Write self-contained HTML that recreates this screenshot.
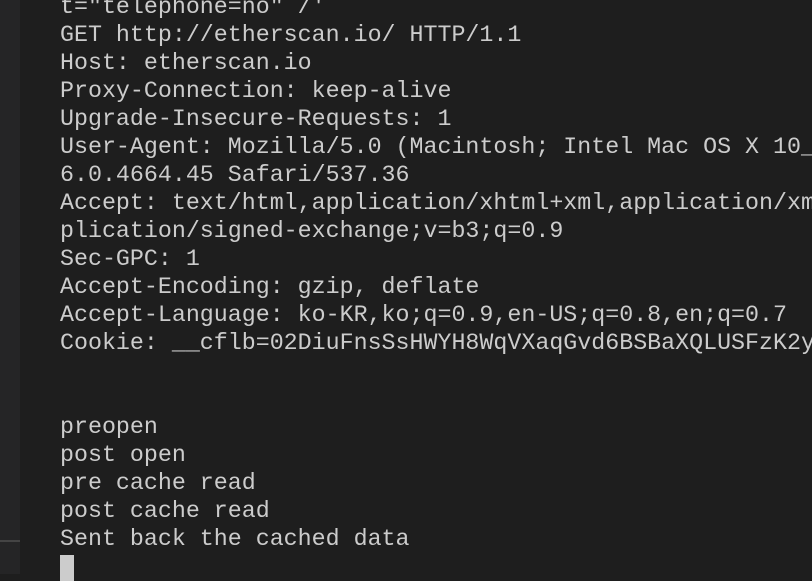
<!DOCTYPE html>
<html><head><meta charset="utf-8"><style>
html,body{margin:0;padding:0;width:812px;height:574px;overflow:hidden;background:#1e1e1e;}
.side{position:absolute;left:0;top:0;width:20px;height:574px;background:#252526;}
.side .ln{position:absolute;left:0;top:540px;width:20px;height:2px;background:#444;}
pre{position:absolute;left:60px;top:-7px;margin:0;font-family:"Liberation Mono",monospace;font-size:23.3px;line-height:28px;color:#cccccc;white-space:pre;}
.cur{display:inline-block;width:14px;height:26px;background:#cccccc;vertical-align:-8px;}
</style></head><body>
<div class="side"><div class="ln"></div></div>
<pre>t="telephone=no" /'
GET http://etherscan.io/ HTTP/1.1
Host: etherscan.io
Proxy-Connection: keep-alive
Upgrade-Insecure-Requests: 1
User-Agent: Mozilla/5.0 (Macintosh; Intel Mac OS X 10_
6.0.4664.45 Safari/537.36
Accept: text/html,application/xhtml+xml,application/xm
plication/signed-exchange;v=b3;q=0.9
Sec-GPC: 1
Accept-Encoding: gzip, deflate
Accept-Language: ko-KR,ko;q=0.9,en-US;q=0.8,en;q=0.7
Cookie: __cflb=02DiuFnsSsHWYH8WqVXaqGvd6BSBaXQLUSFzK2y


preopen
post open
pre cache read
post cache read
Sent back the cached data
<span class="cur"></span></pre>
</body></html>
